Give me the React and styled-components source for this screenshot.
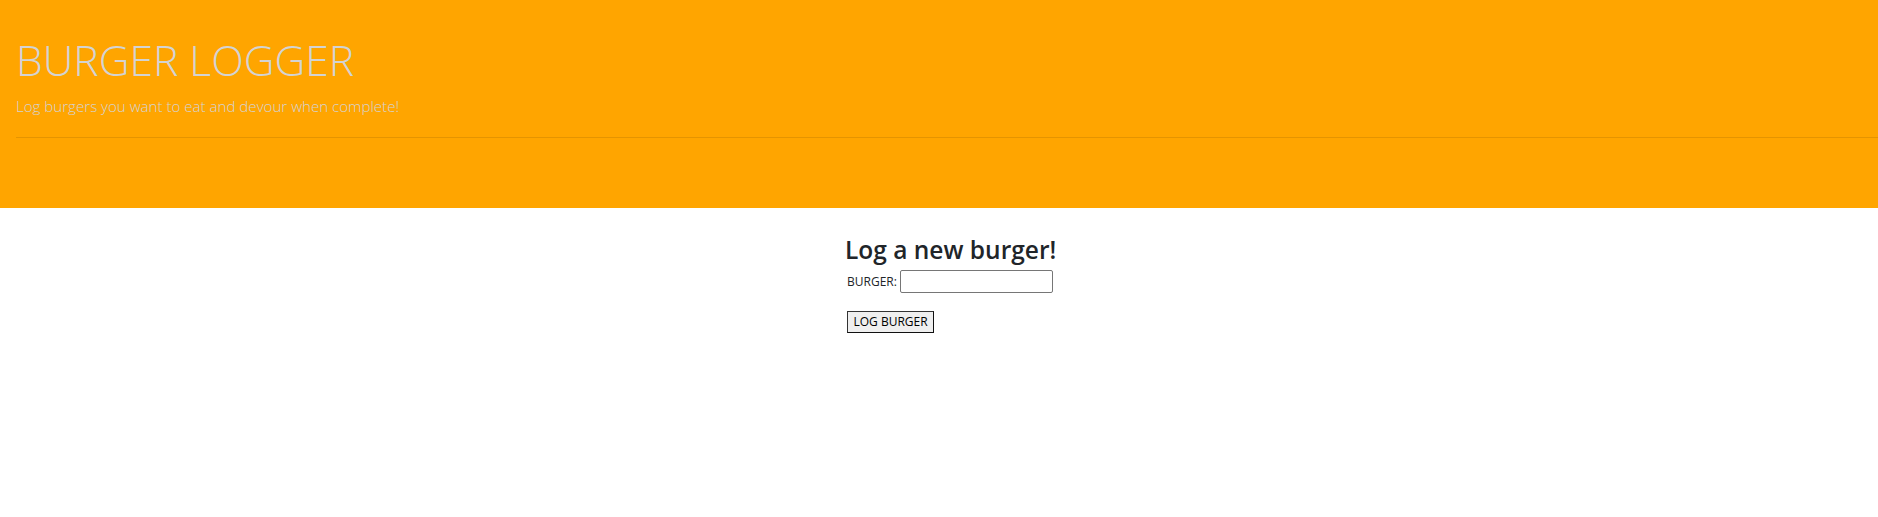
import React from "react";
import styled, { createGlobalStyle } from "styled-components";

const GlobalStyle = createGlobalStyle`
  html, body {
    margin: 0;
    padding: 0;
    background: #ffffff;
    font-family: "Open Sans", "Noto Sans", sans-serif;
    color: #212529;
  }
  * { box-sizing: border-box; }
`;

const Jumbotron = styled.header`
  background: #ffa500;
  height: 208px;
  padding: 33px 0 0 16px;
  overflow: hidden;
`;

const Title = styled.h1`
  margin: 0;
  font-size: 42.6px;
  line-height: 52.8px;
  font-weight: 300;
  color: #d3d3d3;
`;

const Lead = styled.p`
  margin: 8.5px 0 0;
  font-size: 15.1px;
  line-height: 24px;
  font-weight: 300;
  color: #d3d3d3;
`;

const Divider = styled.hr`
  margin: 18.5px 0 0;
  border: 0;
  border-top: 1px solid rgba(0, 0, 0, 0.1);
`;

const Main = styled.main`
  padding: 26px 0 0 calc(50% - 94px);
`;

const FormTitle = styled.h3`
  margin: 0;
  font-size: 24.5px;
  line-height: 31.2px;
  font-weight: 600;
  color: #212529;
`;

const Form = styled.form`
  display: flex;
  flex-direction: column;
  align-items: flex-start;
  padding-left: 2px;
`;

const Row = styled.div`
  display: flex;
  align-items: center;
  gap: 3px;
  margin-top: 4.5px;
`;

const Label = styled.label`
  font-size: 12px;
  color: #212529;
`;

const Input = styled.input`
  width: 153px;
  height: 23px;
  border: 1px solid #767676;
  border-radius: 2px;
  padding: 1px 2px;
  font-family: inherit;
  font-size: 13px;
  background: #fff;
`;

const Button = styled.button`
  margin-top: 18.7px;
  height: 22px;
  padding: 0 5.5px;
  background: #efefef;
  border: 1px solid #333;
  border-right-color: #111;
  border-bottom-color: #111;
  border-radius: 0;
  font-family: inherit;
  font-size: 12px;
  color: #000;
  line-height: 20px;
`;

export default function App() {
  return (
    <>
      <GlobalStyle />
      <Jumbotron>
        <Title>BURGER LOGGER</Title>
        <Lead>Log burgers you want to eat and devour when complete!</Lead>
        <Divider />
      </Jumbotron>
      <Main>
        <FormTitle>Log a new burger!</FormTitle>
        <Form onSubmit={(e) => e.preventDefault()}>
          <Row>
            <Label htmlFor="burger">BURGER:</Label>
            <Input id="burger" type="text" />
          </Row>
          <Button type="submit">LOG BURGER</Button>
        </Form>
      </Main>
    </>
  );
}
